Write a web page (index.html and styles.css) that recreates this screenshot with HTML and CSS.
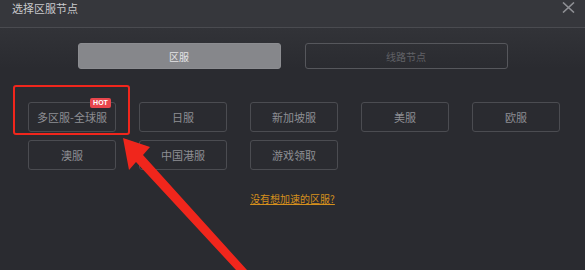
FILE: index.html
```html
<!DOCTYPE html>
<html lang="zh-CN">

<head>
    <meta charset="UTF-8">
    <title>选择区服节点</title>
    <link rel="stylesheet" href="styles.css">
</head>

<body>
    <div class="dialog">
        <div class="dialog-header">
            <span class="dialog-title">选择区服节点</span>
            <svg class="close" width="13" height="11" viewBox="0 0 13 11">
                <path d="M1 0.5 L12 10.5 M12 0.5 L1 10.5" stroke="#8f9095" stroke-width="1.6" fill="none" />
            </svg>
        </div>

        <div class="dialog-body">
            <div class="tabs">
                <div class="tab active">区服</div>
                <div class="tab">线路节点</div>
            </div>

            <div class="server-grid">
                <div class="server">多区服-全球服<span class="hot">HOT</span></div>
                <div class="server">日服</div>
                <div class="server">新加坡服</div>
                <div class="server">美服</div>
                <div class="server">欧服</div>
                <div class="server">澳服</div>
                <div class="server">中国港服</div>
                <div class="server">游戏领取</div>
            </div>

            <div class="more">
                <a href="#">没有想加速的区服?</a>
            </div>
        </div>

        <!-- 標註 -->
        <div class="mark-box"></div>
        <svg class="mark-arrow" width="585" height="270" viewBox="0 0 585 270">
            <polygon points="123,138 150,147 143,155 247,270 236,270 136,162 129,170" fill="#f0261c" />
        </svg>
    </div>
</body>

</html>
```

FILE: styles.css
```css
:root {
    --header: #36373c;
    --body: #2a2b30;
    --line: #4a4b50;
    --btn-border: #4b4c51;
    --btn-text: #8e8f94;
    --accent: #d48f1c;
    --mark: #f0261c;
}

* {
    margin: 0;
    padding: 0;
    box-sizing: border-box;
}

body {
    background-color: var(--body);
    font-family: "Noto Sans CJK SC", "Noto Sans", sans-serif;
    width: 585px;
    height: 270px;
    overflow: hidden;
}

.dialog {
    position: relative;
    width: 585px;
    height: 270px;
    background-color: var(--body);
}

.dialog-header {
    height: 28px;
    background-color: var(--header);
    border-bottom: 1px solid var(--line);
    display: flex;
    justify-content: space-between;
    align-items: flex-start;
    padding: 0 10px 0 12px;
}

.dialog-title {
    color: #c9cacd;
    font-size: 11px;
    line-height: 16px;
}

.close {
    margin-top: 2px;
}

.dialog-body {
    background: linear-gradient(#323338, var(--body) 40px);
    height: 242px;
    padding-top: 15px;
}

.tabs {
    display: flex;
    justify-content: center;
    gap: 24px;
}

.tab {
    width: 203px;
    height: 26px;
    border: 1px solid #56575c;
    border-radius: 3px;
    color: #606166;
    font-size: 10px;
    display: flex;
    align-items: center;
    justify-content: center;
}

.tab.active {
    background-color: #86878b;
    border-color: #8c8d91;
    color: #e4e4e6;
}

.server-grid {
    display: grid;
    grid-template-columns: repeat(5, 88px);
    column-gap: 23px;
    row-gap: 8px;
    padding-left: 28px;
    margin-top: 33px;
}

.server {
    position: relative;
    height: 30px;
    border: 1px solid var(--btn-border);
    border-radius: 3px;
    color: var(--btn-text);
    font-size: 11px;
    display: flex;
    align-items: center;
    justify-content: center;
}

.hot {
    position: absolute;
    top: -5px;
    right: 4px;
    width: 21px;
    height: 10px;
    border-radius: 2px;
    background-color: #e8464c;
    color: #fff;
    font-size: 7px;
    font-weight: 700;
    line-height: 10px;
    text-align: center;
    font-family: "Liberation Sans", sans-serif;
}

.more {
    text-align: center;
    margin-top: 14px;
}

.more a {
    color: var(--accent);
    font-size: 10px;
    text-decoration: underline;
}

.mark-box {
    position: absolute;
    left: 13px;
    top: 85px;
    width: 117px;
    height: 50px;
    border: 2px solid var(--mark);
    border-radius: 3px;
}

.mark-arrow {
    position: absolute;
    left: 0;
    top: 0;
}
```
